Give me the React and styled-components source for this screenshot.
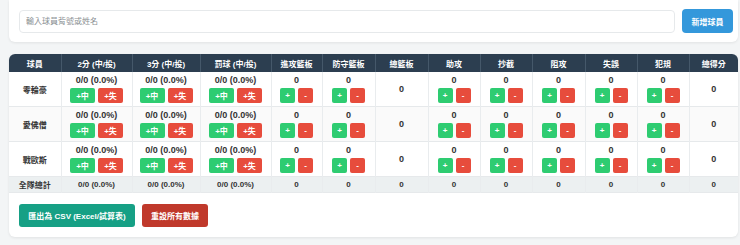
import React from 'react'
import { styled, createGlobalStyle } from 'styled-components'

const GlobalStyle = createGlobalStyle`
  body {
    margin: 0;
    background: #f3f5f6;
    font-family: "Liberation Sans", "Noto Sans CJK TC", sans-serif;
    color: #333;
  }
`

const Page = styled.div`
  padding: 0 2px 8px 9px;
  display: flex;
  flex-direction: column;
  gap: 12px;
`

const Card = styled.div`
  background: #fff;
  border-radius: ${p => (p.$top ? '0 0 6px 6px' : '6px')};
  box-shadow: 0 1px 3px rgba(0, 0, 0, 0.08);
  overflow: hidden;
`

const AddBar = styled.div`
  display: flex;
  align-items: center;
  gap: 7px;
  padding: 9px 5px 9px 10px;
`

const NameInput = styled.input`
  flex: 1;
  height: 23px;
  box-sizing: border-box;
  border: 1px solid #e6e9eb;
  border-radius: 4px;
  padding: 0 6px;
  font-family: inherit;
  font-size: 8px;
  outline: none;
  &::placeholder {
    color: #8a8f93;
  }
`

const Button = styled.button`
  border: none;
  border-radius: ${p => p.$radius || 3}px;
  background: ${p => p.$bg};
  color: #fff;
  font-family: inherit;
  font-weight: bold;
  font-size: 8px;
  height: ${p => p.$h || 23}px;
  width: ${p => p.$w}px;
  padding: 0;
  cursor: pointer;
`

const Table = styled.table`
  width: 729px;
  border-collapse: collapse;
  table-layout: fixed;
`

const Th = styled.th`
  background: #2c3e50;
  color: #fff;
  font-size: 8px;
  font-weight: bold;
  height: 18px;
  padding: 0;
  border-left: 1px solid #45586a;
  &:first-child {
    border-left: none;
  }
`

const Row = styled.tr`
  background: ${p => (p.$total ? '#ecf0f1' : p.$alt ? '#fafafa' : '#fff')};
  border-bottom: 1px solid #e6e9eb;
`

const Td = styled.td`
  text-align: center;
  vertical-align: middle;
  padding: 0;
  height: ${p => (p.$total ? 15 : 34)}px;
  border-left: 1px solid #e9ecee;
  font-size: ${p => (p.$total ? 8 : 9)}px;
  font-weight: bold;
  color: #333;
  &:first-child {
    border-left: none;
  }
`

const NameCell = styled(Td)`
  font-size: 8px;
`

const StatBox = styled.div`
  display: flex;
  flex-direction: column;
  align-items: center;
  gap: 2px;
`

const Value = styled.div`
  line-height: 11px;
`

const BtnPair = styled.div`
  display: flex;
  justify-content: center;
  gap: 3px;
`

const Footer = styled.div`
  display: flex;
  gap: 7px;
  padding: 11px 10px 10px;
`

const players = ['零輪豪', '愛佛僧', '戰歐斯']
const shotCols = ['2分 (中/投)', '3分 (中/投)', '罰球 (中/投)']
const counterCols = ['進攻籃板', '防守籃板', '總籃板', '助攻', '抄截', '阻攻', '失誤', '犯規', '總得分']
const widths = [52, 71, 68, 71, 51, 53, 53, 52, 52, 53, 52, 52, 49]
const GREEN = '#2ecc71'
const RED = '#e74c3c'

function ShotCell() {
  return (
    <Td>
      <StatBox>
        <Value>0/0 (0.0%)</Value>
        <BtnPair>
          <Button $bg={GREEN} $w={25} $h={15} $radius={2}>+中</Button>
          <Button $bg={RED} $w={25} $h={15} $radius={2}>+失</Button>
        </BtnPair>
      </StatBox>
    </Td>
  )
}

function CountCell({ plain }) {
  if (plain) return <Td>0</Td>
  return (
    <Td>
      <StatBox>
        <Value>0</Value>
        <BtnPair>
          <Button $bg={GREEN} $w={15} $h={15} $radius={2}>+</Button>
          <Button $bg={RED} $w={15} $h={15} $radius={2}>-</Button>
        </BtnPair>
      </StatBox>
    </Td>
  )
}

function App() {
  return (
    <Page>
      <GlobalStyle />
      <Card $top>
        <AddBar>
          <NameInput placeholder="輸入球員背號或姓名" />
          <Button $bg="#3498db" $w={51} $h={24} $radius={4}>新增球員</Button>
        </AddBar>
      </Card>
      <Card>
        <Table>
          <colgroup>
            {widths.map((w, i) => <col key={i} style={{ width: w }} />)}
          </colgroup>
          <thead>
            <tr>
              <Th>球員</Th>
              {shotCols.map(c => <Th key={c}>{c}</Th>)}
              {counterCols.map(c => <Th key={c}>{c}</Th>)}
            </tr>
          </thead>
          <tbody>
            {players.map((p, i) => (
              <Row key={p} $alt={i === 1}>
                <NameCell>{p}</NameCell>
                {shotCols.map(c => <ShotCell key={c} />)}
                {counterCols.map(c => (
                  <CountCell key={c} plain={c === '總籃板' || c === '總得分'} />
                ))}
              </Row>
            ))}
            <Row $total>
              <Td $total>全隊總計</Td>
              {shotCols.map(c => <Td $total key={c}>0/0 (0.0%)</Td>)}
              {counterCols.map(c => <Td $total key={c}>0</Td>)}
            </Row>
          </tbody>
        </Table>
        <Footer>
          <Button $bg="#16a085" $w={116}>匯出為 CSV (Excel/試算表)</Button>
          <Button $bg="#c0392b" $w={66}>重設所有數據</Button>
        </Footer>
      </Card>
    </Page>
  )
}

export default App
